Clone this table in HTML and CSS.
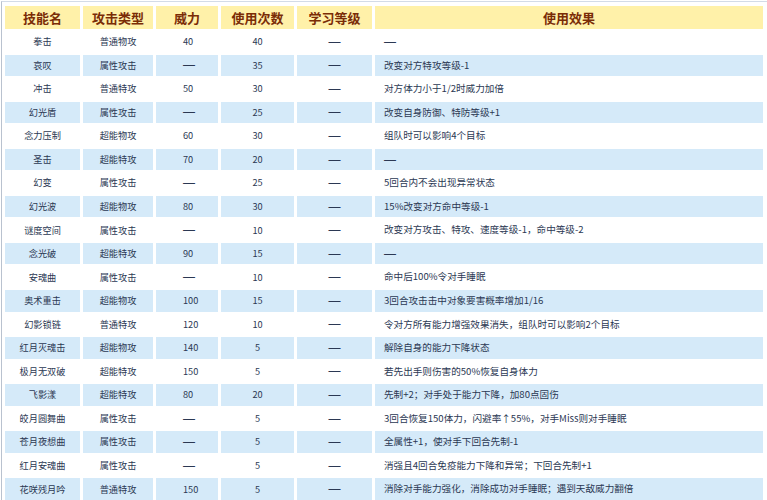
FILE: index.html
```html
<!DOCTYPE html>
<html lang="zh">
<head>
<meta charset="utf-8">
<title>技能表</title>
<link rel="stylesheet" href="styles.css">
</head>
<body>
<div class="frame">
  <div class="skills">
    <div class="row head">
      <div class="c">技能名</div><div class="c">攻击类型</div><div class="c">威力</div><div class="c">使用次数</div><div class="c">学习等级</div><div class="c">使用效果</div>
    </div>
    <div class="row">
      <div class="c">拳击</div><div class="c">普通物攻</div><div class="c pw">40</div><div class="c">40</div><div class="c"><span class="dash">—</span></div><div class="c fx"><span class="dash">—</span></div>
    </div>
    <div class="row alt">
      <div class="c">哀叹</div><div class="c">属性攻击</div><div class="c pw"><span class="dash">—</span></div><div class="c">35</div><div class="c"><span class="dash">—</span></div><div class="c fx">改变对方特攻等级-1</div>
    </div>
    <div class="row">
      <div class="c">冲击</div><div class="c">普通特攻</div><div class="c pw">50</div><div class="c">30</div><div class="c"><span class="dash">—</span></div><div class="c fx">对方体力小于1/2时威力加倍</div>
    </div>
    <div class="row alt">
      <div class="c">幻光盾</div><div class="c">属性攻击</div><div class="c pw"><span class="dash">—</span></div><div class="c">25</div><div class="c"><span class="dash">—</span></div><div class="c fx">改变自身防御、特防等级+1</div>
    </div>
    <div class="row">
      <div class="c">念力压制</div><div class="c">超能物攻</div><div class="c pw">60</div><div class="c">30</div><div class="c"><span class="dash">—</span></div><div class="c fx">组队时可以影响4个目标</div>
    </div>
    <div class="row alt">
      <div class="c">圣击</div><div class="c">超能特攻</div><div class="c pw">70</div><div class="c">20</div><div class="c"><span class="dash">—</span></div><div class="c fx"><span class="dash">—</span></div>
    </div>
    <div class="row">
      <div class="c">幻变</div><div class="c">属性攻击</div><div class="c pw"><span class="dash">—</span></div><div class="c">25</div><div class="c"><span class="dash">—</span></div><div class="c fx">5回合内不会出现异常状态</div>
    </div>
    <div class="row alt">
      <div class="c">幻光波</div><div class="c">超能物攻</div><div class="c pw">80</div><div class="c">30</div><div class="c"><span class="dash">—</span></div><div class="c fx">15%改变对方命中等级-1</div>
    </div>
    <div class="row">
      <div class="c">谜度空间</div><div class="c">属性攻击</div><div class="c pw"><span class="dash">—</span></div><div class="c">10</div><div class="c"><span class="dash">—</span></div><div class="c fx">改变对方攻击、特攻、速度等级-1，命中等级-2</div>
    </div>
    <div class="row alt">
      <div class="c">念光破</div><div class="c">超能特攻</div><div class="c pw">90</div><div class="c">15</div><div class="c"><span class="dash">—</span></div><div class="c fx"><span class="dash">—</span></div>
    </div>
    <div class="row">
      <div class="c">安魂曲</div><div class="c">属性攻击</div><div class="c pw"><span class="dash">—</span></div><div class="c">10</div><div class="c"><span class="dash">—</span></div><div class="c fx">命中后100%令对手睡眠</div>
    </div>
    <div class="row alt">
      <div class="c">奥术重击</div><div class="c">超能物攻</div><div class="c pw">100</div><div class="c">15</div><div class="c"><span class="dash">—</span></div><div class="c fx">3回合攻击击中对象要害概率增加1/16</div>
    </div>
    <div class="row">
      <div class="c">幻影锁链</div><div class="c">普通特攻</div><div class="c pw">120</div><div class="c">10</div><div class="c"><span class="dash">—</span></div><div class="c fx">令对方所有能力增强效果消失，组队时可以影响2个目标</div>
    </div>
    <div class="row alt">
      <div class="c">红月灭魂击</div><div class="c">超能物攻</div><div class="c pw">140</div><div class="c">5</div><div class="c"><span class="dash">—</span></div><div class="c fx">解除自身的能力下降状态</div>
    </div>
    <div class="row">
      <div class="c">极月无双破</div><div class="c">超能特攻</div><div class="c pw">150</div><div class="c">5</div><div class="c"><span class="dash">—</span></div><div class="c fx">若先出手则伤害的50%恢复自身体力</div>
    </div>
    <div class="row alt">
      <div class="c">飞影漾</div><div class="c">超能特攻</div><div class="c pw">80</div><div class="c">20</div><div class="c"><span class="dash">—</span></div><div class="c fx">先制+2；对手处于能力下降，加80点固伤</div>
    </div>
    <div class="row">
      <div class="c">皎月圆舞曲</div><div class="c">属性攻击</div><div class="c pw"><span class="dash">—</span></div><div class="c">5</div><div class="c"><span class="dash">—</span></div><div class="c fx">3回合恢复150体力，闪避率↑55%，对手Miss则对手睡眠</div>
    </div>
    <div class="row alt">
      <div class="c">苍月夜想曲</div><div class="c">属性攻击</div><div class="c pw"><span class="dash">—</span></div><div class="c">5</div><div class="c"><span class="dash">—</span></div><div class="c fx">全属性+1，使对手下回合先制-1</div>
    </div>
    <div class="row">
      <div class="c">红月安魂曲</div><div class="c">属性攻击</div><div class="c pw"><span class="dash">—</span></div><div class="c">5</div><div class="c"><span class="dash">—</span></div><div class="c fx">消强且4回合免疫能力下降和异常；下回合先制+1</div>
    </div>
    <div class="row alt">
      <div class="c">花咲残月吟</div><div class="c">普通特攻</div><div class="c pw">150</div><div class="c">5</div><div class="c"><span class="dash">—</span></div><div class="c fx">消除对手能力强化，消除成功对手睡眠；遇到天敌威力翻倍</div>
    </div>
  </div>
</div>
</body>
</html>
```
FILE: styles.css
```css
html, body {
  margin: 0;
  padding: 0;
  background: #ffffff;
}

body {
  font-family: "Noto Sans CJK SC", "Noto Sans", sans-serif;
  color: #2b3853;
  height: 500px;
  overflow: hidden;
}

.frame {
  margin-top: 1px;
  margin-left: 1px;
  border-top: 1px solid #d3dbe7;
  border-left: 1px solid #b9c2cf;
  padding: 4px 4px 0 3px;
  height: 498px;
  overflow: hidden;
}

.skills {
  display: grid;
  grid-template-columns: 75px 70px 62px 73px 75px 388px;
  grid-template-rows: 23px;
  grid-auto-rows: 21.56px;
  column-gap: 3px;
  row-gap: 2px;
}

.row {
  display: contents;
}

.c {
  display: flex;
  align-items: center;
  justify-content: center;
  font-size: 9.2px;
  line-height: 1;
  white-space: nowrap;
  background: #ffffff;
}

.row.alt .c {
  background: #d5eaf9;
}

.row.head .c {
  background: #fff1a9;
  color: #7a2c06;
  font-weight: bold;
  font-size: 13px;
}

.c.pw {
  justify-content: flex-start;
  padding-left: 27px;
}

.c.fx {
  justify-content: flex-start;
  padding-left: 9px;
  font-size: 9.6px;
}

.row.head .c.fx {
  justify-content: center;
  padding-left: 0;
  font-size: 13px;
}

.dash {
  font-family: "Liberation Sans", sans-serif;
  font-size: 12px;
  line-height: 1;
  color: #2b3853;
}
```
